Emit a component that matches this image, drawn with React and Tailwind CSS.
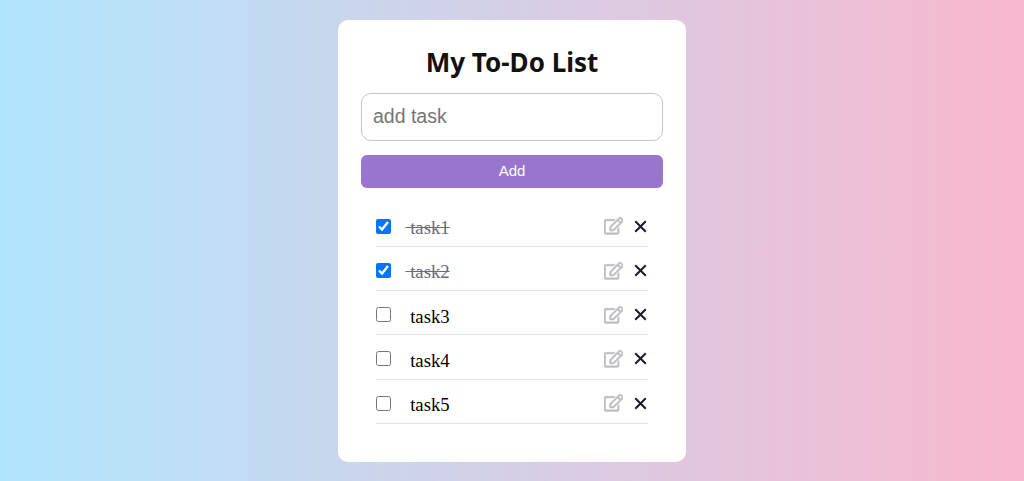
import React from "react";
import { FaRegEdit } from "react-icons/fa";

const tasks = [
  { name: "task1", done: true },
  { name: "task2", done: true },
  { name: "task3", done: false },
  { name: "task4", done: false },
  { name: "task5", done: false },
];

export default function App() {
  return (
    <div className="min-h-[481px] h-[481px] overflow-hidden bg-[linear-gradient(90deg,#b0e6fd_0%,#f9b8cf_100%)] flex justify-center pt-5">
      <div className="w-[348px] h-[442px] bg-white rounded-[10px] px-[23px] pt-[24px] flex flex-col">
        <h1 className="text-center text-[26px] leading-[36px] font-bold text-[#111] font-['Noto_Sans',sans-serif]">
          My To-Do List
        </h1>
        <input
          placeholder="add task"
          className="mt-[13px] h-12 w-full rounded-[10px] border border-[#c8c4c4] px-[11px] pb-[2px] text-[19.5px] font-['Liberation_Sans',sans-serif] placeholder:text-[#757575] outline-none"
        />
        <button className="mt-[14px] h-[33px] w-full rounded-[6px] bg-[#9a75cd] text-white text-[15px] font-['Liberation_Sans',sans-serif]">
          Add
        </button>
        <ul className="mt-[14.5px] mx-[15px] flex flex-col">
          {tasks.map((t) => (
            <li key={t.name} className="h-[44.25px] pt-[4px] flex items-center border-b border-[#e2e2e2] font-['Liberation_Serif',serif]">
              <input type="checkbox" readOnly checked={t.done} className="w-[15px] h-[15px] m-0 accent-[#0075ff] shrink-0" />
              <span className={`ml-[14.5px] text-[18.72px] whitespace-pre relative top-[2px] ${t.done ? "line-through text-[#6b6b7b]" : "text-black"}`}>
                {" " + t.name}
              </span>
              <span className="ml-auto flex items-center gap-[10px]">
                <FaRegEdit className="w-[19.5px] h-[19.5px] text-[#bdbdc2] stroke-[12]" />
                <svg viewBox="0 0 16 16" className="w-[15px] h-[15px] text-[#1a1a2e]" fill="none" stroke="currentColor" strokeWidth="2.1">
                  <path d="M2.4 2.4L13.6 13.6M13.6 2.4L2.4 13.6" />
                </svg>
              </span>
            </li>
          ))}
        </ul>
      </div>
    </div>
  );
}
